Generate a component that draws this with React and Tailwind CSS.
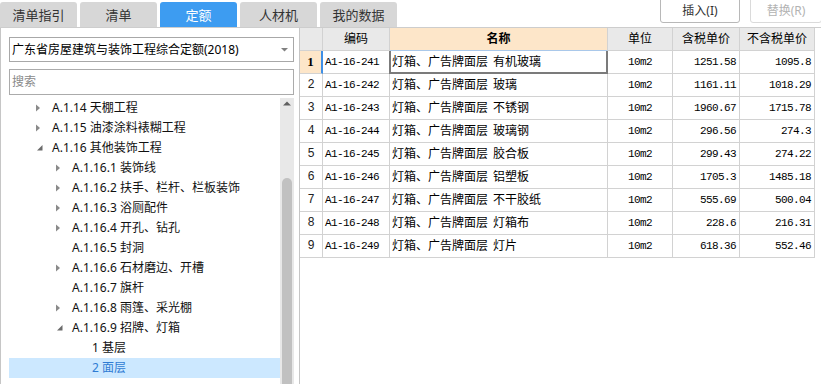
import React from "react";

const tabs = ["清单指引", "清单", "定额", "人材机", "我的数据"];

const tree = [
  { l: 1, a: "c", t: "A.1.14 天棚工程" },
  { l: 1, a: "c", t: "A.1.15 油漆涂料裱糊工程" },
  { l: 1, a: "e", t: "A.1.16 其他装饰工程" },
  { l: 2, a: "c", t: "A.1.16.1 装饰线" },
  { l: 2, a: "c", t: "A.1.16.2 扶手、栏杆、栏板装饰" },
  { l: 2, a: "c", t: "A.1.16.3 浴厕配件" },
  { l: 2, a: "c", t: "A.1.16.4 开孔、钻孔" },
  { l: 2, a: "", t: "A.1.16.5 封洞" },
  { l: 2, a: "c", t: "A.1.16.6 石材磨边、开槽" },
  { l: 2, a: "", t: "A.1.16.7 旗杆" },
  { l: 2, a: "c", t: "A.1.16.8 雨篷、采光棚" },
  { l: 2, a: "e", t: "A.1.16.9 招牌、灯箱" },
  { l: 3, a: "", t: "1 基层" },
  { l: 3, a: "", t: "2 面层", sel: true },
];

const rows = [
  ["A1-16-241", "有机玻璃", "10m2", "1251.58", "1095.8"],
  ["A1-16-242", "玻璃", "10m2", "1161.11", "1018.29"],
  ["A1-16-243", "不锈钢", "10m2", "1960.67", "1715.78"],
  ["A1-16-244", "玻璃钢", "10m2", "296.56", "274.3"],
  ["A1-16-245", "胶合板", "10m2", "299.43", "274.22"],
  ["A1-16-246", "铝塑板", "10m2", "1705.3", "1485.18"],
  ["A1-16-247", "不干胶纸", "10m2", "555.69", "500.04"],
  ["A1-16-248", "灯箱布", "10m2", "228.6", "216.31"],
  ["A1-16-249", "灯片", "10m2", "618.36", "552.46"],
];

function Arrow({ a }) {
  if (a === "c")
    return (
      <svg width="5" height="8" viewBox="0 0 5 8" className="ml-[4px]">
        <polygon points="0,0.5 4,4 0,7.5" fill="#8a8a8a" />
      </svg>
    );
  if (a === "e")
    return (
      <svg width="6" height="6" viewBox="0 0 6 6" className="ml-[5px]">
        <polygon points="5.5,0 5.5,5.5 0,5.5" fill="#6b6b6b" />
      </svg>
    );
  return null;
}

export default function App() {
  return (
    <div className="w-[821px] h-[384px] overflow-hidden bg-white text-black font-['Noto_Sans','Noto_Sans_CJK_SC',sans-serif]">
      {/* top bar */}
      <div className="flex h-[28px] border-b border-[#cdcdcd] bg-white">
        <div className="flex gap-[3px] pt-[2px]">
          {tabs.map((t, i) => (
            <div
              key={t}
              className={
                i === 2
                  ? "w-[77px] h-[25px] rounded-t-[3px] bg-[#3d9cf1] text-white flex items-center justify-center text-[13px] leading-none whitespace-nowrap font-['Noto_Sans_CJK_SC',sans-serif]"
                  : "w-[77px] h-[25px] rounded-t-[3px] bg-[#d7d7d7] text-[#333333] flex items-center justify-center text-[13px] leading-none whitespace-nowrap font-['Noto_Sans_CJK_SC',sans-serif]"
              }
            >
              <span>{t}</span>
            </div>
          ))}
        </div>
        <div className="ml-auto flex items-start gap-[10px] mr-[-1px]">
          <div className="w-[80px] h-[24px] -mt-px border border-[#b8b8b8] rounded-b-[3px] bg-white flex items-center justify-center text-[12px] text-[#333333] leading-none">
            插入(I)
          </div>
          <div className="w-[72px] h-[24px] -mt-px border border-[#dadada] rounded-b-[3px] bg-white flex items-center justify-center text-[12px] text-[#b3b3b3] leading-none">
            替换(R)
          </div>
        </div>
      </div>

      {/* main */}
      <div className="flex h-[356px]">
        {/* left panel */}
        <div className="w-[300px] shrink-0 border-l border-r border-[#c6c6c6] pl-[8px] flex flex-col">
          <div className="mt-[9px] w-[285px] h-[25px] border border-[#a8a8a8] flex items-center pl-[2px] pr-[5px] text-[12px] leading-none">
            <span>广东省房屋建筑与装饰工程综合定额(2018)</span>
            <svg width="7" height="4" viewBox="0 0 7 4" className="ml-auto">
              <polygon points="0,0 7,0 3.5,3.5" fill="#808080" />
            </svg>
          </div>
          <div className="mt-[7px] w-[285px] h-[26px] border border-[#ababab] flex items-center pl-[2px] text-[12px] text-[#8a8a8a] leading-none">
            搜索
          </div>
          <div className="mt-[3px] flex flex-1 min-h-0">
            <div className="w-[271px] overflow-hidden">
              {tree.map((n, i) => (
                <div
                  key={i}
                  className={
                    n.sel
                      ? "h-[20px] flex items-center bg-[#cce8ff] text-[#2f7bd3] text-[12px] leading-[20px]"
                      : "h-[20px] flex items-center text-[12px] leading-[20px] text-[#111111]"
                  }
                  style={{ paddingLeft: 23 + 20 * (n.l - 1) }}
                >
                  <div className="w-[20px] shrink-0 flex items-center">
                    <Arrow a={n.a} />
                  </div>
                  <span className="whitespace-nowrap">{n.t}</span>
                </div>
              ))}
            </div>
            <div className="w-[14px] bg-[#e8e8e8] flex flex-col items-center">
              <svg width="8" height="5" viewBox="0 0 8 5" className="mt-[3px]">
                <polygon points="0,4.5 8,4.5 4,0.5" fill="#606060" />
              </svg>
              <div className="mt-[72px] w-[10px] flex-1 bg-[#c1c1c1] rounded-t-[5px]" />
            </div>
          </div>
        </div>

        {/* grid */}
        <div className="flex-1">
          <div className="grid grid-cols-[23px_67px_218px_65px_67px_75px] text-[12px]">
            <div className="h-[23px] border-r border-b border-[#d2d2d2] bg-[#e9e9e9]" />
            <div className="h-[23px] border-r border-b border-[#d2d2d2] bg-[#e9e9e9] flex items-center justify-center leading-none">编码</div>
            <div className="h-[23px] border-r border-b border-[#d2d2d2] border-b-[#a9c8ea] bg-[#fde6c9] flex items-center justify-center font-bold leading-none">名称</div>
            <div className="h-[23px] border-r border-b border-[#d2d2d2] bg-[#e9e9e9] flex items-center justify-center leading-none">单位</div>
            <div className="h-[23px] border-r border-b border-[#d2d2d2] bg-[#e9e9e9] flex items-center justify-center leading-none">含税单价</div>
            <div className="h-[23px] border-r border-b border-[#d2d2d2] bg-[#e9e9e9] flex items-center justify-center leading-none">不含税单价</div>

            {rows.map((r, i) => (
              <React.Fragment key={r[0]}>
                <div
                  className={
                    i === 0
                      ? "h-[23px] border-r-2 border-r-[#3f8fe6] border-b border-b-[#d2d2d2] bg-[#fde6c9] flex items-center justify-center font-bold font-['Liberation_Serif',serif] text-[13px]"
                      : "h-[23px] border-r border-b border-[#d2d2d2] bg-white flex items-center justify-center font-['Liberation_Mono',monospace] text-[12px] text-[#222222]"
                  }
                >
                  {i + 1}
                </div>
                <div className="h-[23px] border-r border-b border-[#d2d2d2] flex items-center pl-[2px] font-['Liberation_Mono',monospace] text-[11px] tracking-[-0.6px]">
                  {r[0]}
                </div>
                <div className="relative h-[23px] border-r border-b border-[#d2d2d2] flex items-center pl-[2px] leading-none whitespace-nowrap">
                  <span>灯箱、广告牌面层</span>
                  <span className="ml-[5px]">{r[1]}</span>
                  {i === 0 && (
                    <div className="absolute -left-px top-0 -right-px -bottom-px border-2 border-t-0 border-[#7b7b7b] z-10" />
                  )}
                </div>
                <div className="h-[23px] border-r border-b border-[#d2d2d2] flex items-center justify-center font-['Liberation_Mono',monospace] text-[11px] tracking-[-0.6px]">
                  {r[2]}
                </div>
                <div className="h-[23px] border-r border-b border-[#d2d2d2] flex items-center justify-end pr-[3px] font-['Liberation_Mono',monospace] text-[11px] tracking-[-0.6px]">
                  {r[3]}
                </div>
                <div className="h-[23px] border-r border-b border-[#d2d2d2] flex items-center justify-end pr-[3px] font-['Liberation_Mono',monospace] text-[11px] tracking-[-0.6px]">
                  {r[4]}
                </div>
              </React.Fragment>
            ))}
          </div>
        </div>
      </div>
    </div>
  );
}
